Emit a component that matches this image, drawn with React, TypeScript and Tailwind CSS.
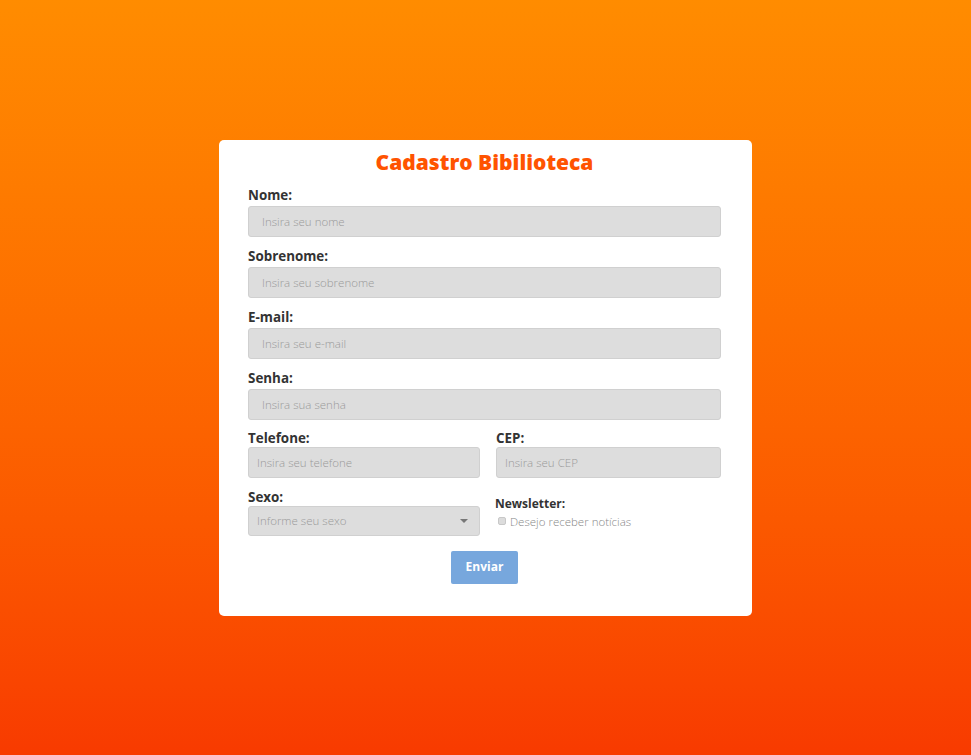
export default function App() {
  const font = { fontFamily: '"Open Sans", "Noto Sans", sans-serif' };
  const label = "block text-[13.4px] font-bold leading-[19px] text-[#333333]";
  const input =
    "block w-full h-[31px] rounded-[3px] border border-[#d0d0d0] bg-[#dddddd] px-[13px] text-[11.5px] font-light text-[#555] placeholder:text-[#9a9a9a] outline-none";
  const half =
    "block w-full h-[31px] rounded-[3px] border border-[#d0d0d0] bg-[#dddddd] px-[8px] text-[11.5px] font-light placeholder:text-[#9a9a9a] outline-none";

  return (
    <div
      style={font}
      className="min-h-screen w-full flex items-center justify-center bg-gradient-to-b from-[#ff8c00] to-[#f83a00]"
    >
      <form className="w-[533px] rounded-[5px] bg-white pl-[29px] pr-[31px] pt-[7px] pb-[32px]">
        <h1 className="text-center text-[21px] font-extrabold leading-[30px] text-[#ff5300]">
          Cadastro Bibilioteca
        </h1>

        <label className={`${label} mt-[9px]`}>Nome:</label>
        <input className={`${input} mt-[1px]`} placeholder="Insira seu nome" />

        <label className={`${label} mt-[10px]`}>Sobrenome:</label>
        <input className={`${input} mt-[1px]`} placeholder="Insira seu sobrenome" />

        <label className={`${label} mt-[10px]`}>E-mail:</label>
        <input className={`${input} mt-[1px]`} placeholder="Insira seu e-mail" />

        <label className={`${label} mt-[10px]`}>Senha:</label>
        <input className={`${input} mt-[1px]`} type="password" placeholder="Insira sua senha" />

        <div className="mt-[9px] flex gap-[16px]">
          <div className="w-[232px]">
            <label className="block text-[13.4px] font-bold leading-[18px] text-[#333333]">Telefone:</label>
            <input className={half} placeholder="Insira seu telefone" />
          </div>
          <div className="flex-1">
            <label className="block text-[13.4px] font-bold leading-[18px] text-[#333333]">CEP:</label>
            <input className={half} placeholder="Insira seu CEP" />
          </div>
        </div>

        <div className="mt-[9px] flex gap-[15px]">
          <div className="w-[232px]">
            <label className="block pt-[2px] text-[13.4px] font-bold leading-[17px] text-[#333333]">Sexo:</label>
            <div className="flex h-[30px] items-center justify-between rounded-[3px] border border-[#d0d0d0] bg-[#dddddd] pl-[8px] pr-[11px]">
              <span className="text-[11.5px] font-light text-[#9a9a9a]">Informe seu sexo</span>
              <svg width="8" height="4" viewBox="0 0 8 4">
                <path d="M0 0h8L4 4z" fill="#777" />
              </svg>
            </div>
          </div>
          <div className="flex-1 pt-[8px]">
            <div className="text-[12px] font-bold leading-[18px] text-[#333333]">Newsletter:</div>
            <label className="flex items-center gap-[4px] pl-[3px]">
              <span className="inline-block h-[8px] w-[8px] rounded-[2px] border border-[#c8c8c8] bg-[#dcdcdc]" />
              <span className="text-[11.5px] font-light leading-[17px] text-[#888888]">Desejo receber notícias</span>
            </label>
          </div>
        </div>

        <div className="mt-[15px] flex justify-center">
          <button
            type="button"
            className="h-[33px] w-[67px] rounded-[2px] bg-[#77a7dd] text-[12px] font-bold text-white"
          >
            Enviar
          </button>
        </div>
      </form>
    </div>
  );
}
